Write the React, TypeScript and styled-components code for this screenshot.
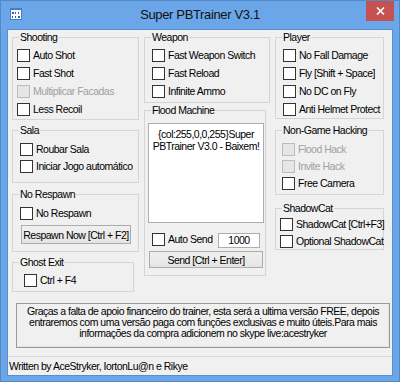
import React from 'react';
import styled, { createGlobalStyle } from 'styled-components';

/**
 * Global styles.
 */

const GlobalStyle = createGlobalStyle`
  html, body {
    margin: 0;
    padding: 0;
  }

  body {
    background: #6ba7e8;
    color: #000;
    font-family: 'Liberation Sans', Arial, sans-serif;
    font-size: 10.5px;
    letter-spacing: -0.5px;
  }
`;

/**
 * Window frame.
 */

const Window = styled.div`
  background: #6ba7e8;
  border: 1px solid #5289c7;
  box-sizing: border-box;
  display: flex;
  flex-direction: column;
  height: 382px;
  padding: 0 6px 5px;
  width: 400px;
`;

const TitleBar = styled.div`
  align-items: start;
  display: grid;
  grid-template-columns: 40px 1fr 40px;
  height: 28px;
  margin: 0 -6px;
`;

const AppIcon = styled.svg`
  display: block;
  margin: 7px 0 0 9px;
`;

const Title = styled.div`
  color: #111;
  font-size: 13px;
  letter-spacing: -0.35px;
  line-height: 16px;
  padding-top: 6px;
  text-align: center;
`;

const CloseButton = styled.div`
  align-items: center;
  background: #c75050;
  display: flex;
  height: 20px;
  justify-content: center;
  justify-self: end;
  margin-right: 5px;
  width: 28px;
`;

const Client = styled.div`
  background: #f0f0f0;
  border: 1px solid #5a8fce;
  display: flex;
  flex: 1;
  flex-direction: column;
`;

/**
 * Group boxes.
 */

const Columns = styled.div`
  align-items: start;
  column-gap: 5px;
  display: grid;
  grid-template-columns: 127px 126px 109px;
  padding: 1px 0 0 4px;
`;

const Column = styled.div`
  align-items: flex-start;
  display: flex;
  flex-direction: column;
`;

const Group = styled.fieldset<{ $h: number; $w?: number; $mt?: number }>`
  border: 1px solid #d5d5d5;
  box-sizing: border-box;
  height: ${p => p.$h}px;
  margin: ${p => p.$mt ?? 0}px 0 0;
  min-width: 0;
  padding: 0;
  width: ${p => (p.$w ? `${p.$w}px` : '100%')};
`;

const Legend = styled.legend`
  line-height: 13px;
  margin-left: 6px;
  padding: 0 1px;
`;

const Body = styled.div<{ $x: number; $pt: number; $gap?: number }>`
  align-items: flex-start;
  display: flex;
  flex-direction: column;
  gap: ${p => p.$gap ?? 5}px;
  padding: ${p => p.$pt}px 0 0 ${p => p.$x - 1}px;
`;

/**
 * Controls.
 */

const CheckRow = styled.label<{ $disabled?: boolean }>`
  align-items: center;
  color: ${p => (p.$disabled ? '#a0a0a0' : '#000')};
  display: flex;
  gap: 3px;
  height: 13px;
  line-height: 13px;
  white-space: nowrap;
`;

const Box = styled.span<{ $disabled?: boolean }>`
  background: ${p => (p.$disabled ? '#e6e6e6' : '#fff')};
  border: 1px solid ${p => (p.$disabled ? '#bcbcbc' : '#333')};
  box-sizing: border-box;
  flex: none;
  height: 13px;
  width: 13px;
`;

const CheckText = styled.span`
  margin-top: -1px;
`;

const PushButton = styled.button<{ $w: number; $h: number; $ml?: number }>`
  align-items: center;
  background: linear-gradient(#f0f0f0, #e5e5e5);
  border: 1px solid #acacac;
  box-sizing: border-box;
  color: #000;
  display: flex;
  font: inherit;
  height: ${p => p.$h}px;
  justify-content: center;
  letter-spacing: inherit;
  margin-left: ${p => p.$ml ?? 0}px;
  padding: 0;
  white-space: nowrap;
  width: ${p => p.$w}px;
`;

const TextArea = styled.div`
  background: #fff;
  border: 1px solid #abadb3;
  box-sizing: border-box;
  height: 100px;
  line-height: 12px;
  padding-top: 4px;
  text-align: center;
  white-space: pre;
  width: 116px;
`;

const SendRow = styled.div`
  align-items: flex-start;
  align-self: stretch;
  display: flex;
  justify-content: space-between;
  margin: 5px 0 -2px;
  padding: 0 5px 0 4px;
`;

const NumberBox = styled.div`
  background: #fff;
  border: 1px solid #abadb3;
  box-sizing: border-box;
  height: 15px;
  line-height: 13px;
  text-align: center;
  width: 42px;
`;

/**
 * Notice and status bar.
 */

const Notice = styled.div`
  border: 1px solid #9a9a9a;
  box-shadow: inset -1px -1px 0 #e3e3e3;
  box-sizing: border-box;
  height: 45px;
  line-height: 11px;
  margin: 11px 0 0 8px;
  padding-top: 2px;
  text-align: center;
  white-space: nowrap;
  width: 374px;
`;

const StatusBar = styled.div`
  border-top: 1px solid #dadada;
  box-sizing: border-box;
  height: 19px;
  line-height: 13px;
  margin-top: auto;
  padding: 3px 0 0 1px;
`;

/**
 * Helpers.
 */

type CheckProps = { label: string; disabled?: boolean };

function Check({ label, disabled }: CheckProps) {
  return (
    <CheckRow $disabled={disabled}>
      <Box $disabled={disabled} />
      <CheckText>{label}</CheckText>
    </CheckRow>
  );
}

/**
 * Export `App` component.
 */

export default function App() {
  return (
    <>
      <GlobalStyle />
      <Window>
        <TitleBar>
          <AppIcon width={12} height={12} viewBox={'0 0 12 12'}>
            <rect x={0.5} y={0.5} width={11} height={11} fill={'#fff'} stroke={'#4a7cc4'} />
            <rect x={0} y={0} width={12} height={2} fill={'#4a7cc4'} />
            <rect x={2} y={4} width={2} height={2} fill={'#2d5fb0'} />
            <rect x={5} y={4} width={1} height={2} fill={'#2d5fb0'} />
            <rect x={8} y={4} width={1} height={2} fill={'#2d5fb0'} />
            <rect x={2} y={8} width={1} height={2} fill={'#2d5fb0'} />
            <rect x={5} y={8} width={1} height={2} fill={'#2d5fb0'} />
            <rect x={8} y={8} width={2} height={2} fill={'#2d5fb0'} />
          </AppIcon>
          <Title>{'Super PBTrainer V3.1'}</Title>
          <CloseButton>
            <svg width={9} height={8} viewBox={'0 0 9 8'}>
              <path d={'M1 0.5L8 7.5M8 0.5L1 7.5'} stroke={'#fff'} strokeWidth={1.6} />
            </svg>
          </CloseButton>
        </TitleBar>

        <Client>
          <Columns>
            <Column>
              <Group $h={89}>
                <Legend>{'Shooting'}</Legend>
                <Body $x={5} $pt={5}>
                  <Check label={'Auto Shot'} />
                  <Check label={'Fast Shot'} />
                  <Check label={'Multiplicar Facadas'} disabled />
                  <Check label={'Less Recoil'} />
                </Body>
              </Group>

              <Group $h={59} $mt={4}>
                <Legend>{'Sala'}</Legend>
                <Body $x={8} $pt={6} $gap={4}>
                  <Check label={'Roubar Sala'} />
                  <Check label={'Iniciar Jogo automático'} />
                </Body>
              </Group>

              <Group $h={64} $mt={5}>
                <Legend>{'No Respawn'}</Legend>
                <Body $x={8} $pt={6}>
                  <Check label={'No Respawn'} />
                  <PushButton $w={110} $h={19} $ml={1}>
                    {'Respawn Now [Ctrl + F2]'}
                  </PushButton>
                </Body>
              </Group>

              <Group $h={36} $w={122} $mt={4}>
                <Legend>{'Ghost Exit'}</Legend>
                <Body $x={12} $pt={5}>
                  <Check label={'Ctrl + F4'} />
                </Body>
              </Group>
            </Column>

            <Column>
              <Group $h={72}>
                <Legend>{'Weapon'}</Legend>
                <Body $x={8} $pt={5}>
                  <Check label={'Fast Weapon Switch'} />
                  <Check label={'Fast Reload'} />
                  <Check label={'Infinite Ammo'} />
                </Body>
              </Group>

              <Group $h={172} $w={122} $mt={1}>
                <Legend>{'Flood Machine'}</Legend>
                <Body $x={4} $pt={6} $gap={5}>
                  <TextArea>{'{col:255,0,0,255}Super\nPBTrainer V3.0 - Baixem!'}</TextArea>
                  <SendRow>
                    <Check label={'Auto Send'} />
                    <NumberBox>{'1000'}</NumberBox>
                  </SendRow>
                  <PushButton $w={114} $h={17} $ml={1}>
                    {'Send [Ctrl + Enter]'}
                  </PushButton>
                </Body>
              </Group>
            </Column>

            <Column>
              <Group $h={88}>
                <Legend>{'Player'}</Legend>
                <Body $x={8} $pt={5}>
                  <Check label={'No Fall Damage'} />
                  <Check label={'Fly [Shift + Space]'} />
                  <Check label={'No DC on Fly'} />
                  <Check label={'Anti Helmet Protect'} />
                </Body>
              </Group>

              <Group $h={71} $mt={5}>
                <Legend>{'Non-Game Hacking'}</Legend>
                <Body $x={7} $pt={6} $gap={4}>
                  <Check label={'Flood Hack'} disabled />
                  <Check label={'Invite Hack'} disabled />
                  <Check label={'Free Camera'} />
                </Body>
              </Group>

              <Group $h={48} $mt={7}>
                <Legend>{'ShadowCat'}</Legend>
                <Body $x={5} $pt={3} $gap={4}>
                  <Check label={'ShadowCat [Ctrl+F3]'} />
                  <Check label={'Optional ShadowCat'} />
                </Body>
              </Group>
            </Column>
          </Columns>

          <Notice>
            {'Graças a falta de apoio financeiro do trainer, esta será a ultima versão FREE, depois'}
            <br />
            {'entraremos com uma versão paga com funções exclusivas e muito úteis.Para mais'}
            <br />
            {'informações da compra adicionem no skype live:acestryker'}
          </Notice>

          <StatusBar>{'Written by AceStryker, IortonLu@n e Rikye'}</StatusBar>
        </Client>
      </Window>
    </>
  );
}
